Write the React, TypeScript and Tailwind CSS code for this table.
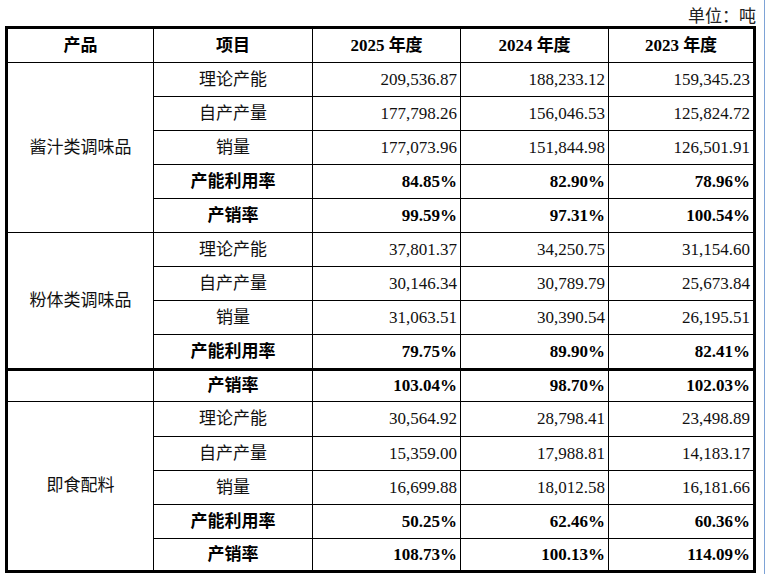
const FONT = '"Liberation Serif", "Noto Sans CJK SC", serif';

type Row = { item: string; values: [string, string, string]; bold?: boolean };

const ROWS: Row[] = [
  { item: '理论产能', values: ['209,536.87', '188,233.12', '159,345.23'] },
  { item: '自产产量', values: ['177,798.26', '156,046.53', '125,824.72'] },
  { item: '销量', values: ['177,073.96', '151,844.98', '126,501.91'] },
  { item: '产能利用率', values: ['84.85%', '82.90%', '78.96%'], bold: true },
  { item: '产销率', values: ['99.59%', '97.31%', '100.54%'], bold: true },
  { item: '理论产能', values: ['37,801.37', '34,250.75', '31,154.60'] },
  { item: '自产产量', values: ['30,146.34', '30,789.79', '25,673.84'] },
  { item: '销量', values: ['31,063.51', '30,390.54', '26,195.51'] },
  { item: '产能利用率', values: ['79.75%', '89.90%', '82.41%'], bold: true },
  { item: '产销率', values: ['103.04%', '98.70%', '102.03%'], bold: true },
  { item: '理论产能', values: ['30,564.92', '28,798.41', '23,498.89'] },
  { item: '自产产量', values: ['15,359.00', '17,988.81', '14,183.17'] },
  { item: '销量', values: ['16,699.88', '18,012.58', '16,181.66'] },
  { item: '产能利用率', values: ['50.25%', '62.46%', '60.36%'], bold: true },
  { item: '产销率', values: ['108.73%', '100.13%', '114.09%'], bold: true },
];

// first-column groups: [label, first body row index, span]
const GROUPS: [string, number, number][] = [
  ['酱汁类调味品', 0, 5],
  ['粉体类调味品', 5, 4],
  ['', 9, 1],
  ['即食配料', 10, 5],
];

const ROW_START = [
  'row-start-2', 'row-start-3', 'row-start-4', 'row-start-5', 'row-start-6',
  'row-start-7', 'row-start-8', 'row-start-9', 'row-start-10', 'row-start-11',
  'row-start-12', 'row-start-13', 'row-start-14', 'row-start-15', 'row-start-16',
];
const ROW_SPAN: Record<number, string> = { 1: 'row-span-1', 4: 'row-span-4', 5: 'row-span-5' };

export default function App() {
  return (
    <div
      className="w-[765px] h-[574px] bg-white border-r border-[#7ea3d6] pl-[5px] text-[17px] text-[#111]"
      style={{ fontFamily: FONT }}
    >
      <div className="w-[751px] h-[26px] pt-[8px] leading-[17px] text-right text-[#222]">单位：吨</div>
      <div className="w-[751px] border-[3px] border-black grid grid-cols-[146px_159px_148px_148px_144px] grid-rows-[34px_34px_34px_34px_34px_34px_34px_34px_34px_36px_31px_35px_34px_34px_34px_31px]">
        {/* Header */}
        {['产品', '项目', '2025 年度', '2024 年度', '2023 年度'].map((h, i) => (
          <div
            key={h}
            className={`row-start-1 flex items-center justify-center font-bold text-black border-b border-black ${
              i < 4 ? 'border-r' : ''
            }`}
          >
            {h}
          </div>
        ))}

        {/* Product column */}
        {GROUPS.map(([label, start, span]) => (
          <div
            key={start}
            className={`col-start-1 ${ROW_START[start]} ${ROW_SPAN[span]} flex items-center justify-center border-r border-black ${
              start + span === 9 ? 'border-b-[3px]' : start + span < 15 ? 'border-b' : ''
            }`}
          >
            {label}
          </div>
        ))}

        {/* Body rows */}
        {ROWS.map((row, r) => {
          const bottom = r === 8 ? 'border-b-[3px]' : r < 14 ? 'border-b' : '';
          return [
            <div
              key={`i${r}`}
              className={`col-start-2 ${ROW_START[r]} flex items-center justify-center border-r border-black ${bottom} ${
                row.bold ? 'font-bold text-black' : ''
              }`}
            >
              {row.item}
            </div>,
            ...row.values.map((v, c) => (
              <div
                key={`v${r}-${c}`}
                className={`${ROW_START[r]} flex items-center justify-end pr-[3px] border-black ${bottom} ${
                  c < 2 ? 'border-r' : ''
                } ${row.bold ? 'font-bold text-black' : ''}`}
              >
                {v}
              </div>
            )),
          ];
        })}
      </div>
    </div>
  );
}
